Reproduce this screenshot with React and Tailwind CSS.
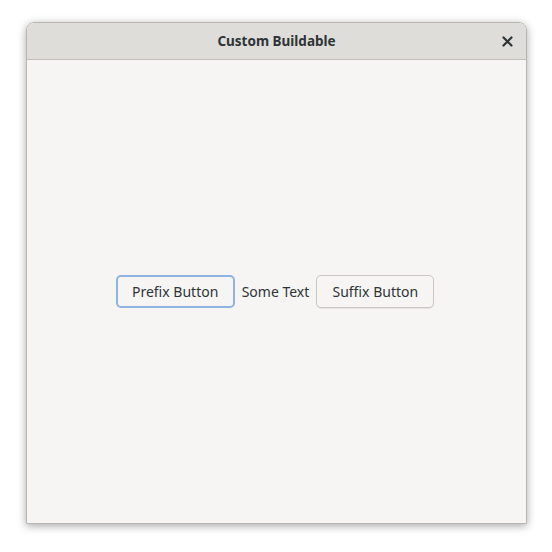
import React from "react";

const font = { fontFamily: "'Noto Sans', 'Open Sans', sans-serif" };

const App = () => {
  return (
    <div className="w-[552px] h-[552px] bg-white pt-[22px] pl-[26px]" style={font}>
      {/* Window */}
      <div className="w-[501px] h-[502px] flex flex-col rounded-t-[8px] border border-[#b9b5b0] shadow-[0_2px_8px_rgba(0,0,0,0.35)] overflow-hidden">
        {/* Header bar */}
        <div className="h-[37px] shrink-0 flex items-center justify-center relative bg-[#deddda] border-b border-[#c0bdb8]">
          <span className="text-[13.5px] font-bold text-[#2e3436]">Custom Buildable</span>
          <button className="absolute right-[11px] top-[10px] w-[16px] h-[16px] flex items-center justify-center">
            <svg width="11" height="11" viewBox="0 0 11 11">
              <path d="M1.5 1.5 L9.5 9.5 M9.5 1.5 L1.5 9.5" stroke="#2e3436" strokeWidth="2.2" strokeLinecap="round" />
            </svg>
          </button>
        </div>

        {/* Content */}
        <div className="flex-1 bg-[#f6f5f4] flex items-center justify-center gap-[7px] pr-[3px]">
          <button className="w-[119px] h-[33px] rounded-[5px] border-2 border-[#8fb3e3] bg-[#f6f5f4] text-[14px] text-[#2e3436]">
            Prefix Button
          </button>
          <span className="text-[14px] text-[#2e3436]">Some Text</span>
          <button className="w-[118px] h-[33px] rounded-[5px] border border-[#cdc7c2] bg-[#f6f5f4] shadow-[0_1px_1px_rgba(0,0,0,0.07)] text-[14px] text-[#2e3436]">
            Suffix Button
          </button>
        </div>
      </div>
    </div>
  );
};

export default App;
